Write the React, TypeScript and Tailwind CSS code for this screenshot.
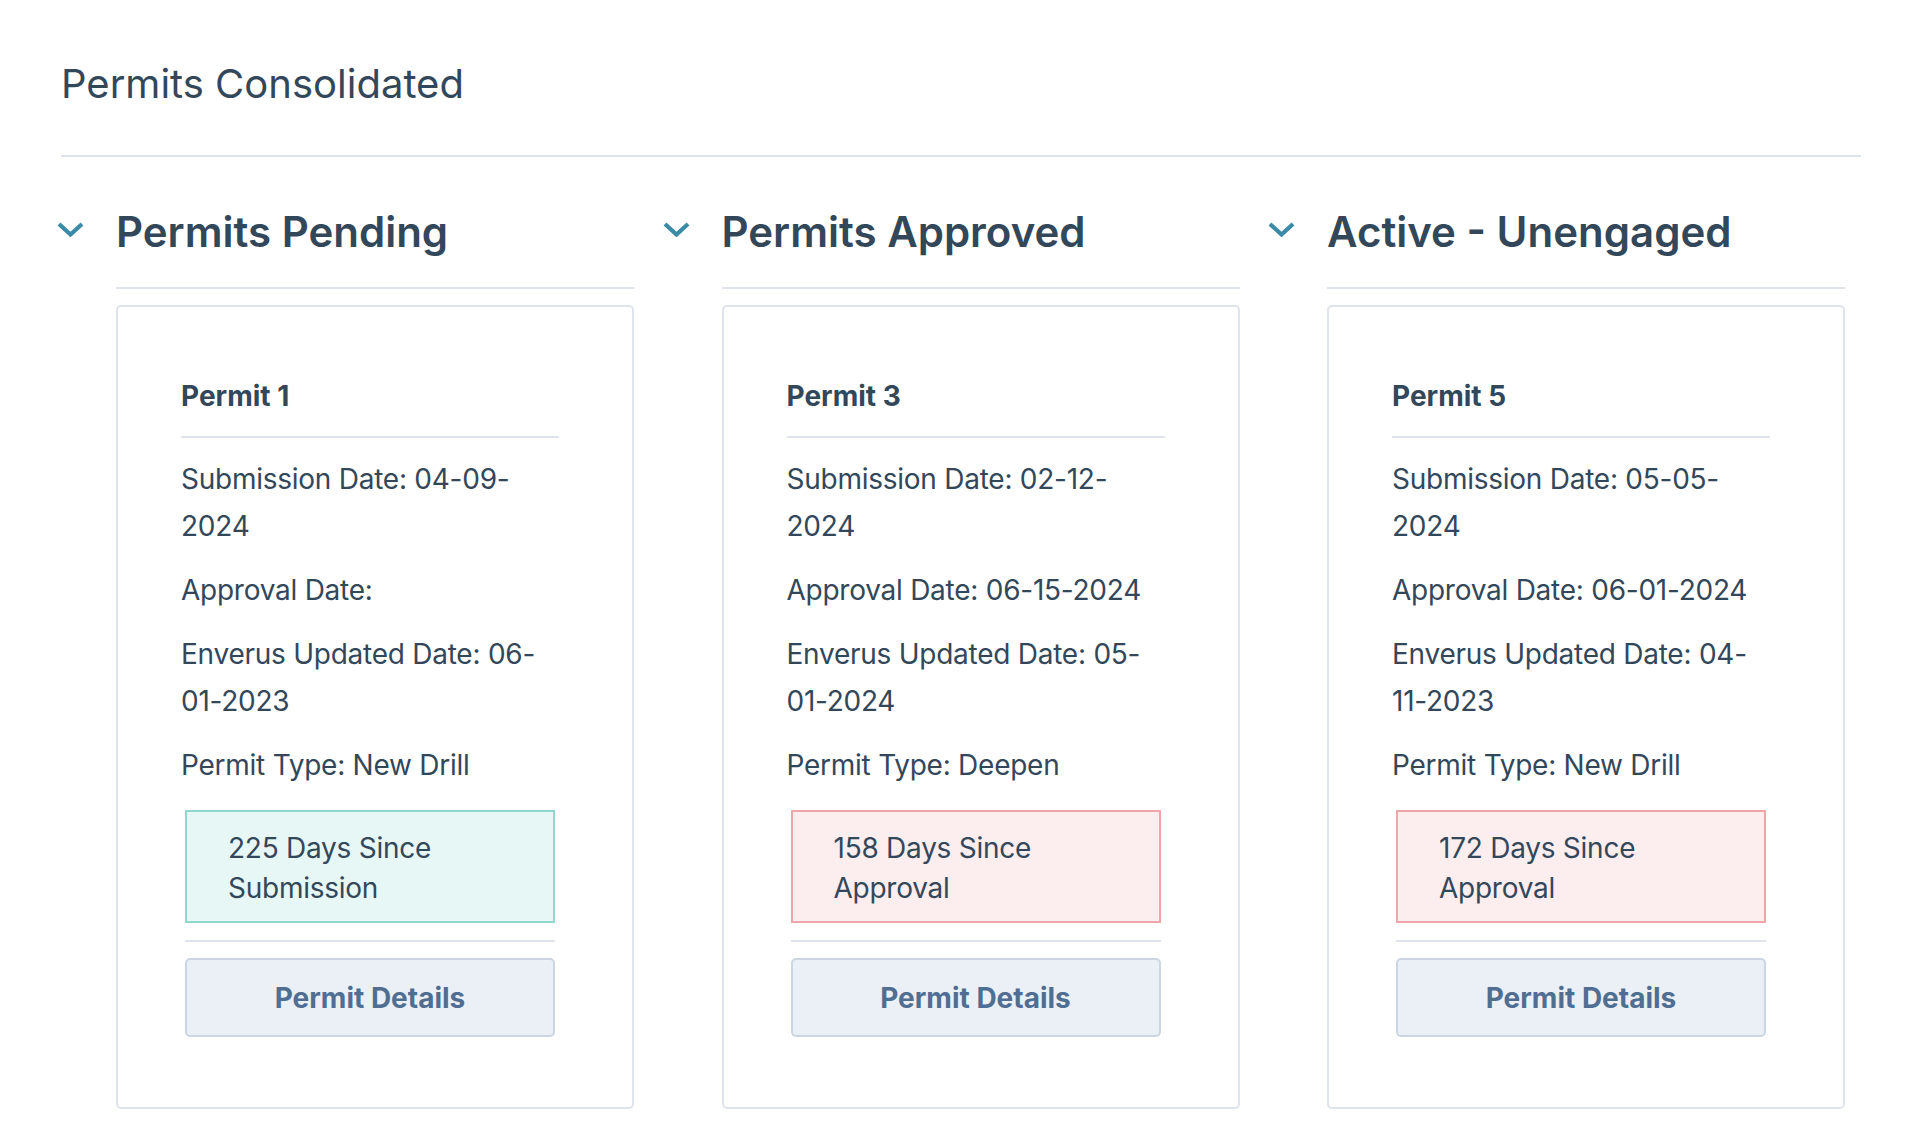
import React from "react";

type Permit = {
  name: string;
  submission: string;
  approval: string;
  updated: string;
  type: string;
  days: string;
  tone: "green" | "red";
};

const sections: { title: string; permit: Permit }[] = [
  {
    title: "Permits Pending",
    permit: {
      name: "Permit 1",
      submission: "04-09-2024",
      approval: "",
      updated: "06-01-2023",
      type: "New Drill",
      days: "225 Days Since Submission",
      tone: "green",
    },
  },
  {
    title: "Permits Approved",
    permit: {
      name: "Permit 3",
      submission: "02-12-2024",
      approval: "06-15-2024",
      updated: "05-01-2024",
      type: "Deepen",
      days: "158 Days Since Approval",
      tone: "red",
    },
  },
  {
    title: "Active - Unengaged",
    permit: {
      name: "Permit 5",
      submission: "05-05-2024",
      approval: "06-01-2024",
      updated: "04-11-2023",
      type: "New Drill",
      days: "172 Days Since Approval",
      tone: "red",
    },
  },
];

function Chevron() {
  return (
    <svg width="27" height="15" viewBox="0 0 27 15" fill="none" className="mt-[15px]">
      <path d="M2 2 L13.5 12.5 L25 2" stroke="#3a8aa8" strokeWidth="4.2" strokeLinejoin="miter" />
    </svg>
  );
}

function PermitCard({ permit }: { permit: Permit }) {
  return (
    <div className="mt-[16px] w-[518px] rounded-[5px] border-2 border-[#dfe3eb] bg-white pl-[63px] pr-[73px] pt-[72px] pb-[70px]">
      <div className="border-b-2 border-[#dfe3eb] pb-[23px] text-[28px] font-bold leading-[34px]">{permit.name}</div>
      <div className="mt-[18px] flex flex-col gap-[17px] text-[28px] leading-[47px] tracking-[-0.25px]">
        <p>Submission Date: {permit.submission}</p>
        <p>Approval Date: {permit.approval}</p>
        <p>Enverus Updated Date: {permit.updated}</p>
        <p>Permit Type: {permit.type}</p>
      </div>
      <div className="mx-[4px] mt-[21px]">
        <div
          className={
            permit.tone === "green"
              ? "border-2 border-[#8fd8cd] bg-[#e7f7f5] pl-[41px] pr-[41px] pt-[16px] pb-[13px] text-[28px] leading-[40px] tracking-[-0.25px]"
              : "border-2 border-[#eea6ab] bg-[#fcedee] pl-[41px] pr-[41px] pt-[16px] pb-[13px] text-[28px] leading-[40px] tracking-[-0.25px]"
          }
        >
          {permit.days}
        </div>
        <div className="mt-[17px] border-t-2 border-[#dfe3eb]" />
        <button className="mt-[16px] flex h-[79px] w-full items-center justify-center rounded-[5px] border-2 border-[#cbd6e2] bg-[#eaf0f6] text-[28px] font-bold leading-[34px] text-[#506e91]">
          Permit Details
        </button>
      </div>
    </div>
  );
}

export default function App() {
  return (
    <div className="min-h-[1134px] w-full bg-white text-[#33475b] [font-family:Inter,'Noto_Sans',sans-serif]">
      <div className="ml-[61px] mr-[47px] border-b-2 border-[#dfe3eb] pt-[60px] pb-[47px]">
        <h1 className="text-[40px] font-normal leading-[48px]">Permits Consolidated</h1>
      </div>
      <div className="grid grid-cols-[577px_577px_577px] gap-x-[28.5px] pl-[57px] pt-[50px]">
        {sections.map((s) => (
          <div key={s.title} className="flex">
            <div className="w-[59px] shrink-0">
              <Chevron />
            </div>
            <div className="w-[518px]">
              <h2 className="border-b-2 border-[#dfe3eb] pb-[30px] text-[42px] font-semibold leading-[50px]">{s.title}</h2>
              <PermitCard permit={s.permit} />
            </div>
          </div>
        ))}
      </div>
    </div>
  );
}
